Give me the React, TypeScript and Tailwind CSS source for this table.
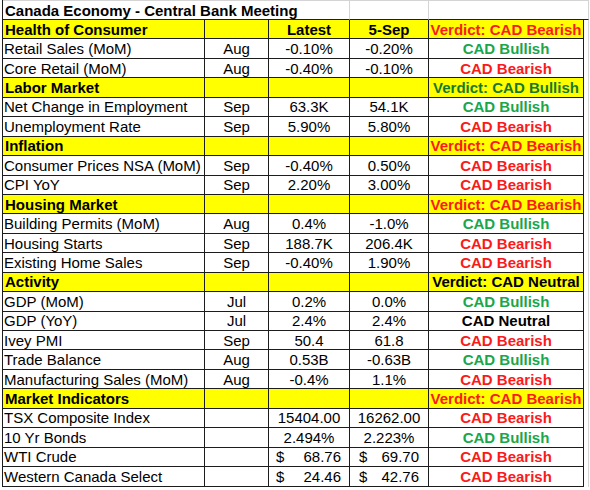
import { Fragment } from 'react';

type Tone = 'bull' | 'bear' | 'neutral';

type Row = {
  name: string;
  month: string;
  latest: string;
  prev: string;
  tone: Tone;
  money?: boolean;
};

type Section = {
  title: string;
  verdict: Tone;
  rows: Row[];
};

const sections: Section[] = [
  {
    title: 'Health of Consumer',
    verdict: 'bear',
    rows: [
      { name: 'Retail Sales (MoM)', month: 'Aug', latest: '-0.10%', prev: '-0.20%', tone: 'bull' },
      { name: 'Core Retail (MoM)', month: 'Aug', latest: '-0.40%', prev: '-0.10%', tone: 'bear' },
    ],
  },
  {
    title: 'Labor Market',
    verdict: 'bull',
    rows: [
      { name: 'Net Change in Employment', month: 'Sep', latest: '63.3K', prev: '54.1K', tone: 'bull' },
      { name: 'Unemployment Rate', month: 'Sep', latest: '5.90%', prev: '5.80%', tone: 'bear' },
    ],
  },
  {
    title: 'Inflation',
    verdict: 'bear',
    rows: [
      { name: 'Consumer Prices NSA (MoM)', month: 'Sep', latest: '-0.40%', prev: '0.50%', tone: 'bear' },
      { name: 'CPI YoY', month: 'Sep', latest: '2.20%', prev: '3.00%', tone: 'bear' },
    ],
  },
  {
    title: 'Housing Market',
    verdict: 'bear',
    rows: [
      { name: 'Building Permits (MoM)', month: 'Aug', latest: '0.4%', prev: '-1.0%', tone: 'bull' },
      { name: 'Housing Starts', month: 'Sep', latest: '188.7K', prev: '206.4K', tone: 'bear' },
      { name: 'Existing Home Sales', month: 'Sep', latest: '-0.40%', prev: '1.90%', tone: 'bear' },
    ],
  },
  {
    title: 'Activity',
    verdict: 'neutral',
    rows: [
      { name: 'GDP (MoM)', month: 'Jul', latest: '0.2%', prev: '0.0%', tone: 'bull' },
      { name: 'GDP (YoY)', month: 'Jul', latest: '2.4%', prev: '2.4%', tone: 'neutral' },
      { name: 'Ivey PMI', month: 'Sep', latest: '50.4', prev: '61.8', tone: 'bear' },
      { name: 'Trade Balance', month: 'Aug', latest: '0.53B', prev: '-0.63B', tone: 'bull' },
      { name: 'Manufacturing Sales (MoM)', month: 'Aug', latest: '-0.4%', prev: '1.1%', tone: 'bear' },
    ],
  },
  {
    title: 'Market Indicators',
    verdict: 'bear',
    rows: [
      { name: 'TSX Composite Index', month: '', latest: '15404.00', prev: '16262.00', tone: 'bear' },
      { name: '10 Yr Bonds', month: '', latest: '2.494%', prev: '2.223%', tone: 'bull' },
      { name: 'WTI Crude', month: '', latest: '68.76', prev: '69.70', tone: 'bear', money: true },
      { name: 'Western Canada Select', month: '', latest: '24.46', prev: '42.76', tone: 'bear', money: true },
    ],
  },
];

const toneLabel: Record<Tone, string> = {
  bull: 'CAD Bullish',
  bear: 'CAD Bearish',
  neutral: 'CAD Neutral',
};

const toneClass: Record<Tone, string> = {
  bull: 'text-[#1aa64a]',
  bear: 'text-[#fb1a1a]',
  neutral: 'text-black',
};

const verdictClass: Record<Tone, string> = {
  bull: 'text-[#157a2c]',
  bear: 'text-[#fb1a1a]',
  neutral: 'text-black',
};

// every grid cell draws its own right and bottom line
const cell = 'flex items-center border-r border-b border-[#1c1c1c] min-w-0';
const grid = 'flex border-r border-[#d4d4d4]';

function Money({ value, pad }: { value: string; pad: string }) {
  return (
    <div className={`flex w-full justify-between ${pad}`}>
      <span>$</span>
      <span>{value}</span>
    </div>
  );
}

export default function App() {
  return (
    <div
      className="w-[590px] h-[490px] bg-white overflow-hidden text-black text-[15px] leading-none"
      style={{ fontFamily: '"Liberation Sans", Arial, sans-serif' }}
    >
      <div className="ml-[2px] grid grid-cols-[202px_64px_81px_79px_155px_5px] grid-rows-[20px_repeat(24,19.45px)] border-l border-[#1c1c1c]">
        {/* title row: plain sheet gridlines */}
        <div className="col-span-3 flex items-center pl-[2px] font-bold whitespace-nowrap border-t border-r border-b border-t-[#d4d4d4] border-r-[#d4d4d4] border-b-[#1c1c1c]">
          Canada Economy - Central Bank Meeting
        </div>
        <div className="border-t border-r border-b border-t-[#d4d4d4] border-r-[#d4d4d4] border-b-[#1c1c1c]"></div>
        <div className="col-span-2 border-t border-r border-b border-t-[#d4d4d4] border-r-[#d4d4d4] border-b-[#1c1c1c]"></div>

        {sections.map((s, si) => (
          <Fragment key={s.title}>
            <div className={`${cell} bg-[#ffff00] pl-[2px] font-bold`}>{s.title}</div>
            <div className={`${cell} bg-[#ffff00]`}></div>
            <div className={`${cell} bg-[#ffff00] justify-center font-bold`}>{si === 0 ? 'Latest' : ''}</div>
            <div className={`${cell} bg-[#ffff00] justify-center font-bold`}>{si === 0 ? '5-Sep' : ''}</div>
            <div className={`${cell} bg-[#ffff00] justify-center font-bold whitespace-nowrap ${verdictClass[s.verdict]}`}>
              Verdict: {toneLabel[s.verdict]}
            </div>
            <div className={grid}></div>
            {s.rows.map((r) => (
              <Fragment key={r.name}>
                <div className={`${cell} pl-[1px] whitespace-nowrap`}>{r.name}</div>
                <div className={`${cell} justify-center`}>{r.month}</div>
                <div className={`${cell} justify-center`}>
                  {r.money ? <Money value={r.latest} pad="pl-[7px] pr-[8px]" /> : r.latest}
                </div>
                <div className={`${cell} justify-center`}>
                  {r.money ? <Money value={r.prev} pad="pl-[9px] pr-[9px]" /> : r.prev}
                </div>
                <div className={`${cell} justify-center font-bold ${toneClass[r.tone]}`}>{toneLabel[r.tone]}</div>
                <div className={grid}></div>
              </Fragment>
            ))}
          </Fragment>
        ))}
      </div>
    </div>
  );
}
